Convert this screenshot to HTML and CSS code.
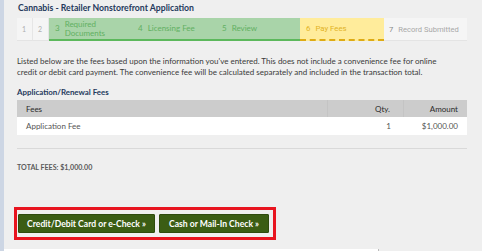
FILE: index.html
```html
<!DOCTYPE html>
<html>
<head>
<meta charset="utf-8">
<link rel="stylesheet" href="styles.css">
</head>
<body>
<div class="page">
  <div class="strip"></div>
  <div class="main">
    <div class="content">
      <div class="title">Cannabis - Retailer Nonstorefront Application</div>
      <div class="stepper">
        <div class="step small">1</div>
        <div class="step small">2</div>
        <div class="step done"><span class="num">3</span><span class="lbl">Required<br>Documents</span></div>
        <div class="step done"><span class="num">4</span><span class="lbl">Licensing Fee</span></div>
        <div class="step done"><span class="num">5</span><span class="lbl">Review</span></div>
        <div class="step current"><span class="num">6</span><span class="lbl">Pay Fees</span></div>
        <div class="step todo"><span class="num">7</span><span class="lbl">Record Submitted</span></div>
      </div>
      <p class="intro">Listed below are the fees based upon the information you've entered. This does not include a convenience fee for online credit or debit card payment. The convenience fee will be calculated separately and included in the transaction total.</p>
      <div class="section">Application/Renewal Fees</div>
      <div class="table">
        <div class="row head">
          <div class="c-fee">Fees</div>
          <div class="c-qty">Qty.</div>
          <div class="c-amt">Amount</div>
        </div>
        <div class="row body">
          <div class="c-fee">Application Fee</div>
          <div class="c-qty">1</div>
          <div class="c-amt">$1,000.00</div>
        </div>
      </div>
      <div class="rule"></div>
      <div class="total">TOTAL FEES: $1,000.00</div>
      <div class="actions">
        <button class="btn b1">Credit/Debit Card or e-Check »</button>
        <button class="btn b2">Cash or Mail-In Check »</button>
      </div>
    </div>
    <div class="footer"><div class="white"></div><div class="mark"></div></div>
  </div>
</div>
</body>
</html>
```
FILE: styles.css
```css
* { box-sizing: border-box; }
html, body { margin: 0; padding: 0; }
body {
  width: 482px;
  height: 251px;
  overflow: hidden;
  background: #efefef;
  font-family: Lato, "Open Sans", sans-serif;
}
.page { display: flex; height: 251px; }
.strip { width: 4px; background: #cdd6e4; flex: none; }
.main { flex: 1; display: flex; flex-direction: column; }
.content { flex: 1; padding: 1px 15px 0 13px; }
.title {
  font-size: 8.7px;
  font-weight: bold;
  color: #24395c;
  line-height: 14px;
  padding-left: 1px;
}
.stepper {
  display: flex;
  margin-top: 3px;
  height: 23px;
}
.step {
  display: flex;
  align-items: center;
  font-size: 8px;
  line-height: 9px;
  padding-left: 6px;
}
.step .num { margin-right: 5px; }
.step.small {
  width: 16px;
  padding-left: 5px;
  background: #f5f5f5;
  color: #b0b0b0;
  font-size: 7px;
  border-right: 1px solid #e6e6e6;
  border-bottom: 1px solid #e4e4e4;
}
.step.done {
  width: 84px;
  background: #a9d4a9;
  color: #62b062;
  border-bottom: 2px solid #5cb85c;
}
.step.done:nth-child(4) { width: 83px; padding-left: 5px; }
.step.done:nth-child(3) .lbl { padding-top: 1px; }
.step.current {
  width: 84px;
  background: #ffec9b;
  color: #e2b326;
  border-bottom: 2px dashed #deab14;
  font-family: Roboto, Lato, sans-serif;
  font-size: 7.8px;
}
.step.todo {
  width: 83px;
  padding-left: 5px;
  background: #f5f5f5;
  color: #a8a8a8;
  border-bottom: 1px solid #e4e4e4;
  font-family: Roboto, Lato, sans-serif;
  font-size: 7.6px;
}
.step.todo .num { color: #888; }
.intro {
  margin: 15px 0 0 0;
  max-width: 428px;
  font-size: 8px;
  line-height: 11px;
  color: #3a3a3a;
}
.section {
  margin-top: 9px;
  font-size: 7.9px;
  font-weight: bold;
  color: #24395c;
  line-height: 11px;
}
.table { margin-top: 2px; }
.row { display: flex; align-items: center; font-size: 8px; }
.row.head { height: 17px; background: #cccccc; color: #2a2a2a; }
.row.body { height: 18px; background: #ffffff; color: #555; }
.c-fee { width: 311px; padding-left: 9px; height: 100%; display: flex; align-items: center; }
.c-qty { width: 76px; padding-right: 13px; height: 100%; display: flex; align-items: center; justify-content: flex-end; }
.c-amt { flex: 1; padding-right: 9px; height: 100%; display: flex; align-items: center; justify-content: flex-end; }
.row.head .c-fee, .row.head .c-qty { border-right: 1px solid #c4c4c4; }
.rule { margin-top: 13px; border-top: 1px solid #d9d9d9; }
.total {
  margin-top: 14px;
  font-size: 7.1px;
  font-weight: bold;
  color: #5a5a5a;
  line-height: 10px;
}
.actions {
  display: inline-flex;
  gap: 4px;
  margin: 34px 0 0 -3px;
  border: 3px solid #e8141f;
  padding: 4px 4px 4px 1px;
}
.btn {
  height: 19px;
  background: #3b5d14;
  border: 1px solid #2f4b0e;
  color: #ffffff;
  font-family: Lato, "Open Sans", sans-serif;
  font-weight: bold;
  font-size: 8.6px;
  padding: 0;
  border-radius: 1px;
}
.b1 { width: 137px; }
.b2 { width: 110px; }
.footer { height: 2px; display: flex; }
.white { width: 374px; background: #ffffff; }
.mark { width: 1px; background: #bbb; }
```
